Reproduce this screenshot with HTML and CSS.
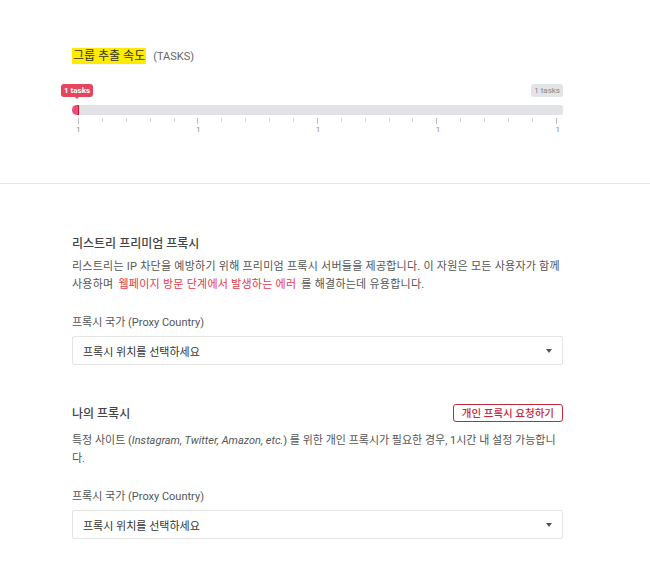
FILE: index.html
```html
<!DOCTYPE html>
<html lang="ko">
<head>
    <meta charset="UTF-8">
    <meta name="viewport" content="width=device-width, initial-scale=1.0">
    <title>프록시 설정</title>
    <link rel="stylesheet" href="styles.css">
</head>
<body>
    <div class="top">
        <div class="wrap">
            <div class="speed-title">
                <span class="mark">그룹 추출 속도</span>
                <span class="unit">(TASKS)</span>
            </div>

            <div class="slider">
                <div class="slider-labels">
                    <span class="tag tag-cur">1 tasks</span>
                    <span class="tag tag-max">1 tasks</span>
                </div>
                <div class="track">
                    <div class="fill"></div>
                </div>
                <div class="ticks">
                    <span class="tick major"></span><span class="tick"></span><span class="tick"></span><span class="tick"></span><span class="tick"></span>
                    <span class="tick major"></span><span class="tick"></span><span class="tick"></span><span class="tick"></span><span class="tick"></span>
                    <span class="tick major"></span><span class="tick"></span><span class="tick"></span><span class="tick"></span><span class="tick"></span>
                    <span class="tick major"></span><span class="tick"></span><span class="tick"></span><span class="tick"></span><span class="tick"></span>
                    <span class="tick major"></span>
                </div>
                <div class="tick-nums">
                    <span>1</span><span>1</span><span>1</span><span>1</span><span>1</span>
                </div>
            </div>
        </div>
    </div>

    <div class="wrap content">
        <div class="block">
            <div class="block-head">
                <h4>리스트리 프리미엄 프록시</h4>
            </div>
            <p class="desc desc-wide">리스트리는 IP 차단을 예방하기 위해 프리미엄 프록시 서버들을 제공합니다. 이 자원은 모든 사용자가 함께 사용하며 <span class="warn">웹페이지 방문 단계에서 발생하는 에러</span> 를 해결하는데 유용합니다.</p>

            <label class="field-label">프록시 국가 (Proxy Country)</label>
            <div class="select">
                <span>프록시 위치를 선택하세요</span>
                <span class="caret"></span>
            </div>
        </div>

        <div class="block">
            <div class="block-head with-action">
                <h4>나의 프록시</h4>
                <button class="btn-outline">개인 프록시 요청하기</button>
            </div>
            <p class="desc">특정 사이트 (<i>Instagram, Twitter, Amazon, etc.</i>) 를 위한 개인 프록시가 필요한 경우, 1시간 내 설정 가능합니다.</p>

            <label class="field-label">프록시 국가 (Proxy Country)</label>
            <div class="select">
                <span>프록시 위치를 선택하세요</span>
                <span class="caret"></span>
            </div>
        </div>
    </div>
</body>
</html>
```

FILE: styles.css
```css
body { margin: 0; background: #fff; color: #333; font-family: Roboto, "Noto Sans CJK KR", sans-serif; font-size: 11px; }
.wrap { width: 491px; margin-left: 72px; }

.top { border-bottom: 1px solid #e6e6e6; padding: 48px 0 49px; }
.speed-title { display: flex; align-items: center; gap: 7px; }
.mark { background: #ffeb00; color: #333; font-size: 12px; line-height: 16px; padding: 0 1px; }
.unit { color: #666; font-size: 11px; }

.slider { margin-top: 20px; }
.slider-labels { display: flex; justify-content: space-between; height: 13px; }
.tag { font-size: 8px; line-height: 13px; padding: 0 3px; border-radius: 3px; }
.tag-cur { background: #e5465e; color: #fff; font-weight: bold; margin-left: -11px; position: relative; }
.tag-cur::after { content: ""; position: absolute; left: 50%; bottom: -4px; margin-left: -2px; border: 2px solid transparent; border-top-color: #e5465e; }
.tag-max { background: #e2e4e8; color: #888; }
.track { margin-top: 8px; height: 10px; background: #e1e3e7; border-radius: 2px; }
.fill { width: 6px; height: 10px; background: #ec4c7c; border-radius: 5px 0 0 5px; border-right: 1px solid #c8102e; }

.ticks { display: flex; justify-content: space-between; padding: 0 6px; margin-top: 3px; height: 6px; align-items: flex-start; }
.tick { width: 1px; height: 4px; background: #d4d6da; }
.tick.major { height: 6px; background: #bbb; }
.tick-nums { display: flex; justify-content: space-between; padding: 0 3px 0 4px; margin-top: 1px; font-size: 8px; color: #888; }

.content { padding-top: 50px; }
.block { margin-bottom: 39px; }
.block-head { display: flex; justify-content: space-between; align-items: center; height: 17px; }
.block-head.with-action { margin-bottom: 11px; }
h4 { margin: 0; font-size: 12px; font-weight: 500; color: #444; }
.btn-outline { font-family: inherit; font-size: 10.5px; font-weight: 500; color: #c4283d; background: #fff; border: 1px solid #c4283d; border-radius: 3px; padding: 0 8px; height: 18px; cursor: pointer; }
.desc { margin: 7px 0 0; font-size: 11px; line-height: 18px; color: #555; }
.desc-wide { letter-spacing: 0.25px; }
.warn { color: #e5394a; margin: 0 2px; }
.field-label { display: block; margin-top: 19px; font-size: 11px; color: #555; }
.select { display: flex; justify-content: space-between; align-items: center; margin-top: 7px; height: 27px; border: 1px solid #e4e4e4; border-radius: 2px; padding: 0 10px 0 10px; font-size: 11px; color: #333; }
.caret { border: 3px solid transparent; border-top: 4px solid #555; margin-top: 4px; }
```
